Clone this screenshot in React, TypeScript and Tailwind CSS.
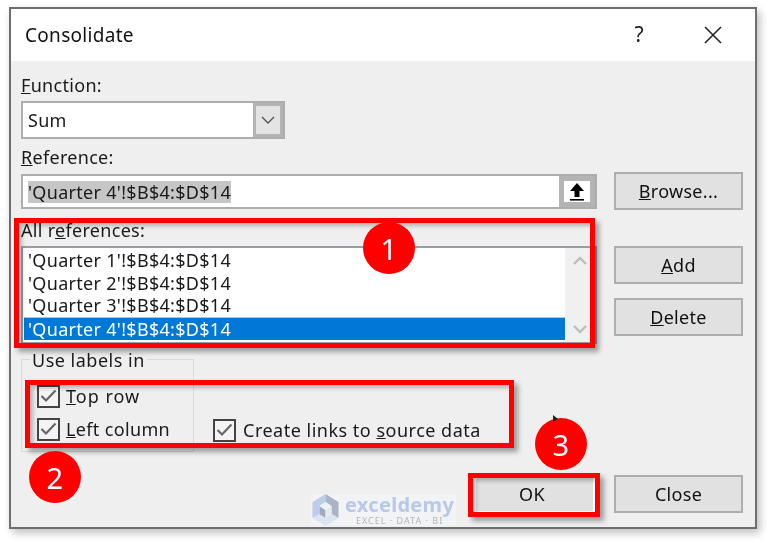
const font = { fontFamily: '"Noto Sans", "Open Sans", sans-serif' };

function Button({ children, className = 'w-[129px] border-[#adadad]' }: { children: React.ReactNode; className?: string }) {
  return (
    <div className={`flex h-[38px] items-center justify-center border-2 bg-[#e1e1e1] text-[18px] text-[#111] ${className}`}>
      {children}
    </div>
  );
}

function Check({ label }: { label: React.ReactNode }) {
  return (
    <div className="flex h-[22px] items-center gap-[7px] text-[18px] leading-none tracking-[0.5px] text-[#1a1a1a]">
      <div className="flex h-[23px] w-[23px] items-center justify-center border-2 border-[#444] bg-[#f4f4f4]">
        <svg width="17" height="14" viewBox="0 0 17 14" fill="none" stroke="#666" strokeWidth="2.2">
          <path d="M1.5 7 L6 11.5 L15.5 1.5" />
        </svg>
      </div>
      {label}
    </div>
  );
}

function Badge({ n, className }: { n: number; className: string }) {
  return (
    <div className={`absolute flex h-[52px] w-[52px] items-center justify-center rounded-full bg-[#fe0000] text-[29px] leading-none text-white ${className}`}>
      {n}
    </div>
  );
}

const redBox = 'absolute border-[5px] border-[#fe0000] shadow-[4px_4px_5px_rgba(0,0,0,0.35),inset_3px_3px_4px_rgba(0,0,0,0.25)]';

export default function App() {
  return (
    <div style={font} className="relative h-[541px] w-[767px] overflow-hidden bg-white pl-[9px] pt-[7px] tracking-[0.3px] blur-[0.4px]">
      <div className="flex h-[522px] w-[748px] flex-col border-2 border-[#6e6e6e] shadow-[3px_4px_8px_rgba(0,0,0,0.25)]">
        {/* title bar */}
        <div className="flex h-[52px] shrink-0 items-center justify-between bg-white pl-[14px] pr-[32px]">
          <span className="text-[19px] text-[#111]">Consolidate</span>
          <div className="flex items-center gap-[59px]">
            <span className="text-[21px] text-[#222]">?</span>
            <svg width="20" height="20" viewBox="0 0 20 20" stroke="#222" strokeWidth="1.6">
              <path d="M2 2 L18 18 M18 2 L2 18" />
            </svg>
          </div>
        </div>

        <div className="flex-1 bg-[#efefef] pl-[10px] pt-[12px] text-[18px] text-[#1a1a1a]">
          <div className="flex h-[24px] items-center"><span><u>F</u>unction:</span></div>
          <div className="mt-[4px] flex h-[38px] w-[264px] border-2 border-[#adadad] bg-white">
            <div className="flex flex-1 items-center pl-[5px]">Sum</div>
            <div className="flex w-[30px] items-center justify-center border-[3px] border-[#b4b4b4] bg-[#e4e4e4]">
              <svg width="14" height="8" viewBox="0 0 14 8" fill="none" stroke="#555" strokeWidth="1.4">
                <path d="M1 1 L7 7 L13 1" />
              </svg>
            </div>
          </div>

          <div className="mt-[6px] flex h-[24px] items-center"><span><u>R</u>eference:</span></div>
          <div className="mt-[3px] flex items-start gap-[17px]">
            <div className="mt-[2px] flex h-[35px] w-[576px] border-2 border-[#adadad] bg-white">
              <div className="flex flex-1 items-center pl-[5px]">
                <span className="bg-[#c6c6c6] leading-[22px]">'Quarter 4'!$B$4:$D$14</span>
              </div>
              <div className="flex w-[36px] items-center justify-center border-[5px] border-[#b4b4b4] bg-white">
                <svg width="16" height="20" viewBox="0 0 16 20" fill="#000">
                  <path d="M8 1 L15 9 L10.5 9 L10.5 15 L5.5 15 L5.5 9 L1 9 Z" />
                  <rect x="1" y="17" width="14" height="1.6" />
                </svg>
              </div>
            </div>
            <Button><span><u>B</u>rowse...</span></Button>
          </div>

          <div className="mt-[8px] flex h-[24px] items-center"><span>All r<u>e</u>ferences:</span></div>
          <div className="mt-[4px] flex items-start gap-[17px]">
            <div className="flex h-[98px] w-[576px] border-2 border-[#9a9ea3] bg-white pl-[1px]">
              <div className="flex flex-1 flex-col">
                <div className="flex h-[24px] items-center pl-[4px]">'Quarter 1'!$B$4:$D$14</div>
                <div className="flex h-[22px] items-center pl-[4px]">'Quarter 2'!$B$4:$D$14</div>
                <div className="flex h-[23px] items-center pl-[4px]">'Quarter 3'!$B$4:$D$14</div>
                <div className="flex h-[23px] items-center border-t border-[#9cc8ee] bg-[#0078d7] pl-[4px] text-white">'Quarter 4'!$B$4:$D$14</div>
              </div>
              <div className="flex w-[30px] flex-col items-center justify-between bg-[#f0f0f0] py-[8px]">
                <svg width="14" height="9" viewBox="0 0 14 9" fill="none" stroke="#bdbdbd" strokeWidth="2.4"><path d="M1 8 L7 2 L13 8" /></svg>
                <svg width="14" height="9" viewBox="0 0 14 9" fill="none" stroke="#bdbdbd" strokeWidth="2.4"><path d="M1 1 L7 7 L13 1" /></svg>
              </div>
            </div>
            <div className="flex flex-col gap-[14px]">
              <Button><span><u>A</u>dd</span></Button>
              <Button><span><u>D</u>elete</span></Button>
            </div>
          </div>

          <div className="mt-[15px] flex items-end">
            <div className="relative flex h-[93px] w-[173px] flex-col gap-[11px] border border-[#d9d9d9] pl-[15px] pt-[25px]">
              <span className="absolute left-[8px] top-[-11px] bg-[#efefef] px-[2px] leading-[22px] tracking-[0.5px]">Use labels in</span>
              <Check label={<span className="-ml-px tracking-[1px]"><u>T</u>op row</span>} />
              <Check label={<span className="-ml-px tracking-[0.35px]"><u>L</u>eft column</span>} />
            </div>
            <div className="mb-[11px] ml-[19px]">
              <Check label={<span>Create links to <u>s</u>ource data</span>} />
            </div>
          </div>

          <div className="mt-[23px] flex gap-[19px] pl-[453px]">
            <Button className="w-[121px] border-white pr-[5px]">OK</Button>
            <Button>Close</Button>
          </div>
        </div>
      </div>

      {/* annotations */}
      <div className={`${redBox} left-[14px] top-[218px] h-[130px] w-[581px]`} />
      <div className={`${redBox} left-[25px] top-[380px] h-[68px] w-[489px]`} />
      <div className={`${redBox} left-[468px] top-[473px] h-[44px] w-[132px]`} />
      <Badge n={1} className="left-[363px] top-[222px]" />
      <Badge n={2} className="left-[29px] top-[451px]" />
      <Badge n={3} className="left-[535px] top-[418px]" />
      <svg className="absolute left-[552px] top-[415px]" width="8" height="8" viewBox="0 0 8 8"><path d="M1 0 L1 7 L6 4 Z" fill="#222" /></svg>

      {/* watermark */}
      <div className="absolute left-[311px] top-[494px] flex items-center gap-[5px] bg-[#f2f3f5] pr-[2px]">
        <svg width="29" height="32" viewBox="0 0 28 32">
          <path d="M14 0 L1 8 L1 24 L8 20 L8 12 L14 8 Z" fill="#bccdeb" />
          <path d="M14 0 L27 8 L27 24 L20 20 L20 12 L14 8 Z" fill="#a9b3c3" />
          <path d="M1 24 L14 32 L27 24 L20 20 L14 24 L8 20 Z" fill="#dbe4f0" />
          <path d="M8 12 L14 16 L14 24 L8 20 Z" fill="#9fabbb" />
          <path d="M20 12 L14 16 L14 24 L20 20 Z" fill="#e4e9f2" />
          <path d="M14 8 L20 12 L14 16 L8 12 Z" fill="#eef1f6" />
        </svg>
        <div className="flex flex-col">
          <span className="text-[20px] font-bold leading-[21px] tracking-[0.3px] text-[#b8c8ea]">exceldemy</span>
          <span className="ml-[11px] text-[9px] leading-[11px] tracking-[1px] text-[#b5b5b5]">EXCEL · DATA · BI</span>
        </div>
      </div>
    </div>
  );
}
